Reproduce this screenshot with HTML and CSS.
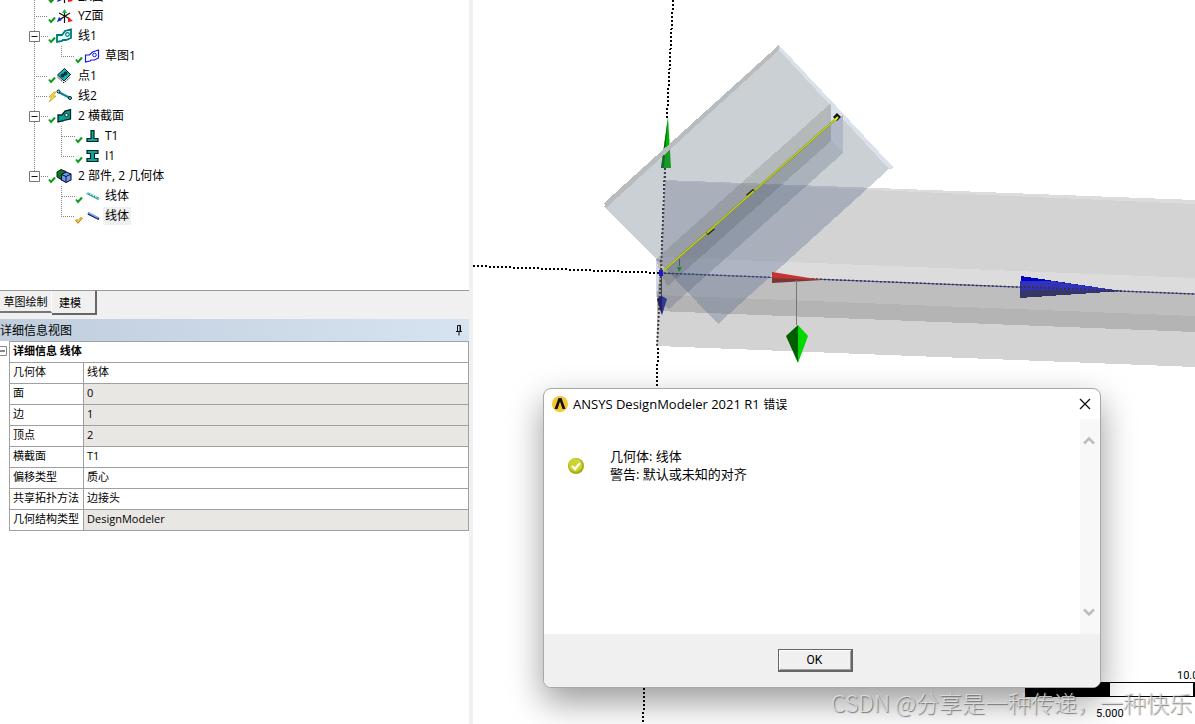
FILE: index.html
```html
<!DOCTYPE html>
<html lang="zh-CN">
<head>
    <meta charset="UTF-8">
    <meta name="viewport" content="width=device-width, initial-scale=1.0">
    <title>DesignModeler</title>
    <link rel="stylesheet" href="styles.css">
</head>
<body>

    <!-- Shared icons -->
    <svg class="defs" width="0" height="0">
        <symbol id="check" viewBox="0 0 8 20"><path d="M1 13.5 3 16 7 11.5" fill="none" stroke="#0a9a1c" stroke-width="2"/></symbol>
        <symbol id="check-warn" viewBox="0 0 8 20"><path d="M1 13.5 3 16 7 11.5" fill="none" stroke="#b07a10" stroke-width="2.4"/><path d="M1 13.3 3 15.5 7 11.3" fill="none" stroke="#ffc830" stroke-width="1.2"/></symbol>
        <symbol id="bolt" viewBox="0 0 8 20"><path d="M6 6 1 11h3l-3 5 7-6H5l3-4z" fill="#ffe040" stroke="#b99a10" stroke-width=".7"/></symbol>
        <symbol id="plane" viewBox="0 0 18 20"><path d="M8.500 4v13M3 7l11 6M3 14l11-7" stroke="#111" stroke-width="1.200"/><path d="M6 7l2.500-4L11 7z" fill="#12c22c"/><path d="M1 16l2-5 3 3z" fill="#1720e8"/><path d="M12 11l5 4-5 1z" fill="#f01818"/></symbol>
        <symbol id="line" viewBox="0 0 18 20"><path d="M1 16V9h5l3-4 6-1.500V12l-5 2H7l-1 1z" fill="#dff" stroke="#04777c" stroke-width="1.800"/><circle cx="11.500" cy="8.500" r="1.800" fill="#fff" stroke="#04777c" stroke-width="1.200"/></symbol>
        <symbol id="sketch" viewBox="-1 0 18 20"><path d="M1.500 16V9h4l3-3 6-2v8l-4 2H7l-1 1z" fill="none" stroke="#1616e6" stroke-width="1.200"/><circle cx="10.500" cy="9" r="1.800" fill="none" stroke="#1616e6"/></symbol>
        <symbol id="point" viewBox="0 0 18 20"><path d="M1.500 11 8 17l6.500-6" fill="#fff" stroke="#111" stroke-dasharray="1.500 1"/><path d="M1.500 9 8.500 2.500l6 6L8 15z" fill="#08bcc0" stroke="#111"/><circle cx="6.500" cy="9.500" r="1.500" fill="#045" stroke="#111"/><circle cx="9.500" cy="7.500" r="1.500" fill="#045" stroke="#111"/></symbol>
        <symbol id="edge" viewBox="0 0 18 20"><path d="M2.500 6 14 12" stroke="#06858c" stroke-width="2"/><circle cx="2.500" cy="5.500" r="1.500" fill="#4df0f0" stroke="#111"/><circle cx="14" cy="12" r="1.500" fill="#4df0f0" stroke="#111"/></symbol>
        <symbol id="sections" viewBox="0 0 18 20"><path d="M2 16V9h4l3-4 5.500-1.500V13L9 14l-2 1z" fill="#08a09a" stroke="#022" stroke-width="1.300"/><circle cx="10.500" cy="9" r="1.700" fill="#fff" stroke="#022"/></symbol>
        <symbol id="t-shape" viewBox="-2 0 18 20"><path d="M6 4.500h3v8h4v3H2v-3h4z" fill="#08a8a0" stroke="#022" stroke-width="1.200"/></symbol>
        <symbol id="i-shape" viewBox="-2 0 18 20"><path d="M2 4.500h11v3H9.500v5H13v3H2v-3h3.500v-5H2z" fill="#08a8a0" stroke="#022" stroke-width="1.200"/></symbol>
        <symbol id="parts" viewBox="0 0 18 20"><path d="M1 6 5 3.500l5 2V12l-4 2-5-3z" fill="#0a7a1c" stroke="#021"/><path d="M5.500 8.500 10 6l5 2v6l-5 2.500-4.500-2.500z" fill="#6d9af2" stroke="#113" stroke-width="1.100"/><path d="M5.500 8.500 10 10.500l5-2.500M10 10.500v6" fill="none" stroke="#113"/></symbol>
        <symbol id="body-teal" viewBox="-2 0 18 20"><path d="M2 7 14 13" stroke="#178c80" stroke-width="2.500"/><path d="M2 6.500 14 12.500" stroke="#a8f0e8" stroke-width="1.500" stroke-dasharray="2 1"/></symbol>
        <symbol id="body-blue" viewBox="-2 0 18 20"><path d="M3 7.500 14 13" stroke="#101a50" stroke-width="2.500"/><path d="M3 6.500 13.500 12" stroke="#7aa2ee" stroke-width="1.500"/></symbol>
        <!-- Tree connectors -->
        <symbol id="rail-root" viewBox="0 0 48 20"><path d="M34.500 0v20M36 10.500h12" class="dots"/></symbol>
        <symbol id="rail-open" viewBox="0 0 48 20"><path d="M34.500 0v20M41 10.500h7" class="dots"/><path d="M29.500 5.500h10v10h-10z" fill="#fff" stroke="#777"/><path d="M31.500 10.500h6" stroke="#111"/></symbol>
        <symbol id="rail-open-last" viewBox="0 0 48 20"><path d="M34.500 0v5M41 10.500h7" class="dots"/><path d="M29.500 5.500h10v10h-10z" fill="#fff" stroke="#777"/><path d="M31.500 10.500h6" stroke="#111"/></symbol>
        <symbol id="rail-mid" viewBox="0 0 75 20"><path d="M34.500 0v20M61.500 0v20M62 10.500h13" class="dots"/></symbol>
        <symbol id="rail-end" viewBox="0 0 75 20"><path d="M34.500 0v20M61.500 0v10.500H75" class="dots"/></symbol>
        <symbol id="rail-sub-mid" viewBox="0 0 75 20"><path d="M61.500 0v20M62 10.500h13" class="dots"/></symbol>
        <symbol id="rail-sub-end" viewBox="0 0 75 20"><path d="M61.500 0v10.500H75" class="dots"/></symbol>
    </svg>

    <div class="app">
        <aside class="sidebar">
            <!-- Model tree -->
            <ul class="tree">
                <li class="row row-cut"><svg class="rail"><use href="#rail-root"/></svg><svg class="state"><use href="#check"/></svg><svg class="icon"><use href="#plane"/></svg><span class="label">ZX面</span></li>
                <li class="row"><svg class="rail"><use href="#rail-root"/></svg><svg class="state"><use href="#check"/></svg><svg class="icon"><use href="#plane"/></svg><span class="label">YZ面</span></li>
                <li>
                    <div class="row"><button class="toggle" aria-label="折叠 线1"><svg class="rail"><use href="#rail-open"/></svg></button><svg class="state"><use href="#check"/></svg><svg class="icon"><use href="#line"/></svg><span class="label">线1</span></div>
                    <ul>
                        <li class="row"><svg class="rail rail-sub"><use href="#rail-end"/></svg><svg class="state"><use href="#check"/></svg><svg class="icon"><use href="#sketch"/></svg><span class="label">草图1</span></li>
                    </ul>
                </li>
                <li class="row"><svg class="rail"><use href="#rail-root"/></svg><svg class="state"><use href="#check"/></svg><svg class="icon"><use href="#point"/></svg><span class="label">点1</span></li>
                <li class="row"><svg class="rail"><use href="#rail-root"/></svg><svg class="state"><use href="#bolt"/></svg><svg class="icon"><use href="#edge"/></svg><span class="label">线2</span></li>
                <li>
                    <div class="row"><button class="toggle" aria-label="折叠 横截面"><svg class="rail"><use href="#rail-open"/></svg></button><svg class="state"><use href="#check"/></svg><svg class="icon"><use href="#sections"/></svg><span class="label">2 横截面</span></div>
                    <ul>
                        <li class="row"><svg class="rail rail-sub"><use href="#rail-mid"/></svg><svg class="state"><use href="#check"/></svg><svg class="icon"><use href="#t-shape"/></svg><span class="label">T1</span></li>
                        <li class="row"><svg class="rail rail-sub"><use href="#rail-end"/></svg><svg class="state"><use href="#check"/></svg><svg class="icon"><use href="#i-shape"/></svg><span class="label">I1</span></li>
                    </ul>
                </li>
                <li>
                    <div class="row"><button class="toggle" aria-label="折叠 部件"><svg class="rail"><use href="#rail-open-last"/></svg></button><svg class="state"><use href="#check"/></svg><svg class="icon"><use href="#parts"/></svg><span class="label">2 部件, 2 几何体</span></div>
                    <ul>
                        <li class="row"><svg class="rail rail-sub"><use href="#rail-sub-mid"/></svg><svg class="state"><use href="#check"/></svg><svg class="icon"><use href="#body-teal"/></svg><span class="label">线体</span></li>
                        <li class="row"><svg class="rail rail-sub"><use href="#rail-sub-end"/></svg><svg class="state"><use href="#check-warn"/></svg><svg class="icon"><use href="#body-blue"/></svg><span class="label selected">线体</span></li>
                    </ul>
                </li>
            </ul>

            <div class="tabs">
                <button class="tab">草图绘制</button>
                <button class="tab active">建模</button>
            </div>

            <!-- Details view -->
            <div class="details-header">
                <span>详细信息视图</span>
                <button class="pin" aria-label="固定"><svg width="8" height="12" viewBox="0 0 8 12"><path d="M2.500 7V1.500h3V7M1 7.500h6M4 8v3.500M5 2v5" fill="none" stroke="#111"/></svg></button>
            </div>
            <div class="details">
                <button class="collapse" aria-label="折叠"><svg width="7" height="10" viewBox="0 0 7 10"><path d="M-2 .5h8.500v9H-2" fill="none" stroke="#888"/><path d="M0 5h5" stroke="#111"/></svg></button>
                <table>
                    <tr><th colspan="2" class="group">详细信息 线体</th></tr>
                    <tr><th>几何体</th><td>线体</td></tr>
                    <tr><th>面</th><td class="readonly">0</td></tr>
                    <tr><th>边</th><td class="readonly">1</td></tr>
                    <tr><th>顶点</th><td class="readonly">2</td></tr>
                    <tr><th>横截面</th><td>T1</td></tr>
                    <tr><th>偏移类型</th><td>质心</td></tr>
                    <tr><th>共享拓扑方法</th><td>边接头</td></tr>
                    <tr><th>几何结构类型</th><td class="readonly">DesignModeler</td></tr>
                </table>
            </div>
        </aside>

        <main class="viewport">
            <svg class="scene" viewBox="473 0 722 724" preserveAspectRatio="xMinYMin slice">
                <!-- Axes -->
                <g stroke="#000" stroke-width="2" stroke-dasharray="2 2" fill="none" shape-rendering="crispEdges">
                    <path d="M673 0 667 118M665 168 661 273 656 400 643 724"/>
                    <path d="M473 266 660 273"/>
                </g>
                <path d="M668 117 671 168H661z" fill="#00b400"/>
                <path d="M668 117 664 168H661z" fill="#006e10"/>

                <!-- Horizontal beam -->
                <g shape-rendering="crispEdges">
                    <path d="M665 180 1195 200V294L660 273z" fill="#dcdcdc"/>
                    <path d="M665 181 1195 204V278L662 257z" fill="#d3d3d3"/>
                    <path d="M660 273 1195 294V316L657 295z" fill="#bebebe"/>
                    <path d="M657 295 1195 316V332L657 311z" fill="#b4b4b4"/>
                    <path d="M657 311 1195 332V367L657 346z" fill="#d3d3d3"/>
                </g>
                <path d="M660 273 1195 294" stroke="#5357c8"/>
                <path d="M660 273 1195 294" stroke="#333" stroke-width="1.500" stroke-dasharray="2 2"/>
                <path d="M665 168 661 273 657 346" fill="none" stroke="#333" stroke-width="2" stroke-dasharray="2 2"/>

                <!-- Tilted T section -->
                <g shape-rendering="crispEdges">
                    <path d="M779 50 890 168 718 324 656 259 604 206z" fill="rgba(78,98,112,.3)"/>
                    <path d="M665 180 869 188 718 324 661 264z" fill="rgba(160,165,255,.1)"/>
                    <path d="M779 45v5L606 208l-2-5z" fill="#b8bcbf"/>
                    <path d="M779 45 893 167 890 170 779 50z" fill="#dbe1ea"/>
                    <path d="M831 103V123L660 273 656 259z" fill="rgba(80,75,65,.18)"/>
                    <path d="M831 123V141L668 286 660 273z" fill="rgba(32,45,59,.3)"/>
                    <path d="M831 141 843 153 669 309 656 297V259H661V273L668 286z" fill="rgba(58,76,104,.22)"/>
                    <path d="M831 103 843 115V153L831 141z" fill="#dbe1ea"/>
                    <path d="M831 123 843 115V153L831 141z" fill="#b2b9c6"/>
                </g>
                <path d="M661 273 837 118" stroke="#7c8420" stroke-width="2"/>
                <path d="M661 273 837 118" stroke="#c4d81c" stroke-width="1.200"/>
                <path d="M833 117 837 113 841 117 837 121z" fill="#111"/>
                <path d="M835 120 838 117" stroke="#e6fb00" stroke-width="2"/>
                <path d="M747 196 754 190M707 234 714 228" stroke="#222" stroke-width="3"/>
                <path d="M747 197 754 191M707 233 714 227" stroke="#b5c810" stroke-width="2"/>

                <!-- Direction arrows -->
                <path d="M659 270h4v6h-4z" fill="#1a1ad0"/>
                <path d="M661.500 276V298" stroke="#444"/>
                <path d="M657 299 662 296 667 299 662 315z" fill="#343494"/>
                <path d="M657 299 662 296V315z" fill="#20205e"/>
                <path d="M679.500 259V266" stroke="#555"/>
                <path d="M677 267h5L679 272z" fill="#168c26"/>
                <path d="M772 272 822 280H772z" fill="#c43432"/>
                <path d="M772 278 822 280 772 283z" fill="#783636"/>
                <path d="M796.500 280V325" stroke="#777"/>
                <path d="M798 325 808 336 798 363z" fill="#00d800"/>
                <path d="M798 325 786 336 798 363z" fill="#005e00"/>
                <g shape-rendering="crispEdges">
                    <path d="M1021 276 1122 291 1021 282z" fill="#0000cc"/>
                    <path d="M1020 281h32L1122 291 1020 290z" fill="#3333b8"/>
                    <path d="M1020 290 1122 291 1020 298z" fill="#363666"/>
                </g>
                <path d="M1020 287 1122 291" stroke="#333" stroke-width="1.500" stroke-dasharray="2 2"/>

                <!-- Scale bar -->
                <path d="M1109.500 682.500h85v14h-85" fill="#fff" stroke="#000" shape-rendering="crispEdges"/>
                <path d="M1025 682h85v15h-85zM1193 682h2v15h-2z"/>
                <text x="1177" y="679" class="scale">10.000</text>
                <text x="1096" y="717" class="scale">5.000</text>
            </svg>
        </main>
    </div>

    <!-- Error dialog -->
    <div class="dialog" role="dialog" aria-labelledby="dialogTitle">
        <div class="dialog-title">
            <svg width="16" height="16" viewBox="0 0 16 16"><circle cx="8" cy="8" r="8" fill="#f7c628"/><path d="M2.500 13 6.500 2h3l4 11h-3L8 5.500 5.500 13z" fill="#111"/></svg>
            <span id="dialogTitle">ANSYS DesignModeler 2021 R1 <small>错误</small></span>
            <button class="close" aria-label="关闭"><svg width="12" height="12" viewBox="0 0 12 12"><path d="M1 1 11 11M11 1 1 11" stroke="#111" stroke-width="1.300"/></svg></button>
        </div>
        <div class="dialog-body">
            <svg class="ok-icon" width="16" height="16" viewBox="0 0 16 16"><circle cx="8" cy="8" r="8" fill="#a5ad10"/><circle cx="7.500" cy="7" r="6.800" fill="#cbd32c"/><path d="M4 8 7 11 12 5" fill="none" stroke="#fff" stroke-width="2.400"/></svg>
            <p>几何体: 线体<br>警告: 默认或未知的对齐</p>
            <div class="scrollbar">
                <button aria-label="向上"><svg width="12" height="9" viewBox="0 0 12 9"><path d="M1 7.500 6 2.500 11 7.500" fill="none" stroke="#bdbdbd" stroke-width="2.500"/></svg></button>
                <button aria-label="向下"><svg width="12" height="9" viewBox="0 0 12 9"><path d="M1 1.500 6 6.500 11 1.500" fill="none" stroke="#bdbdbd" stroke-width="2.500"/></svg></button>
            </div>
        </div>
        <div class="dialog-footer">
            <button class="ok">OK</button>
        </div>
    </div>

    <div class="watermark">CSDN @分享是一种传递，一种快乐</div>

</body>
</html>
```
FILE: styles.css
```css
* {
    box-sizing: border-box;
}
body {
    margin: 0;
    font-family: "Open Sans", "Noto Sans CJK SC", sans-serif;
    font-size: 12px;
    color: #000;
    background: #fff;
    overflow: hidden;
}
button {
    font: inherit;
    color: inherit;
    padding: 0;
    border: none;
    background: none;
}
svg {
    display: block;
    flex: none;
}
.defs {
    position: absolute;
}
.app {
    display: flex;
    position: relative;
    height: 100vh;
}
.sidebar {
    flex: 0 0 473px;
    border-right: 4px solid #f0f0f0;
    overflow: hidden;
}

/* Tree */
.tree {
    height: 290px;
    overflow: hidden;
}
.tree, .tree ul {
    list-style: none;
    margin: 0;
    padding: 0;
}
.row {
    display: flex;
    align-items: center;
    height: 20px;
}
.row-cut {
    height: 6px;
    align-items: flex-end;
}
.rail {
    width: 48px;
    height: 20px;
}
.rail-sub {
    width: 75px;
}
.dots {
    fill: none;
    stroke: #888;
    stroke-dasharray: 1 1;
    shape-rendering: crispEdges;
}
.state {
    width: 8px;
    height: 20px;
}
.icon {
    width: 18px;
    height: 20px;
}
.label {
    line-height: 18px;
    padding: 0 2px;
    margin-left: 2px;
    white-space: nowrap;
}
.selected {
    background: #f0f0f0;
}

/* Tabs */
.tabs {
    display: flex;
    align-items: flex-start;
    height: 29px;
    background: #f0f0f0;
    border-top: 1px solid #999;
    font-size: 11px;
}
.tab {
    height: 22px;
    width: 52px;
    border-right: 1px solid #fff;
    border-bottom: 2px solid #777;
}
.tab.active {
    height: 24px;
    width: 45px;
    padding-right: 7px;
    border-right: 2px solid #666;
    border-bottom-color: #666;
}

/* Details */
.details-header {
    display: flex;
    justify-content: space-between;
    align-items: center;
    height: 22px;
    padding-right: 6px;
    background: linear-gradient(to right, #bfcddc, #d6e4f2);
}
.details {
    display: flex;
    align-items: flex-start;
}
.collapse {
    flex: 0 0 9px;
    padding-top: 5px;
}
table {
    flex: 1;
    border-collapse: collapse;
    table-layout: fixed;
    font-size: 11px;
    line-height: 18px;
}
th, td {
    height: 21px;
    padding: 0 3px 2px;
    border: 1px solid #a0a0a0;
    text-align: left;
    font-weight: normal;
    white-space: nowrap;
}
th {
    width: 74px;
}
.group {
    width: auto;
    font-weight: bold;
}
.readonly {
    background: #e8e7e3;
}

/* 3D view */
.viewport {
    flex: 1;
    min-width: 0;
}
.scene {
    width: 100%;
    height: 100%;
}
.scale {
    font: 11px Roboto, sans-serif;
}

/* Dialog */
.dialog {
    position: absolute;
    left: 543px;
    top: 388px;
    width: 558px;
    border: 1px solid #a8a8a8;
    border-radius: 8px;
    background: #fff;
    box-shadow: 0 14px 34px rgba(0, 0, 0, 0.4);
    overflow: hidden;
}
.dialog-title {
    display: flex;
    align-items: center;
    gap: 5px;
    height: 30px;
    padding: 0 9px 0 8px;
    font-size: 13px;
    line-height: 18px;
}
.dialog-title small {
    font-size: 12px;
}
.close {
    margin-left: auto;
}
.dialog-body {
    display: flex;
    height: 215px;
}
.ok-icon {
    margin: 39px 26px 0 24px;
}
.dialog-body p {
    flex: 1;
    margin: 28px 0 0;
    font-size: 13px;
    line-height: 18px;
}
.scrollbar {
    display: flex;
    flex-direction: column;
    justify-content: space-between;
    align-items: center;
    width: 20px;
    padding: 17px 2px 17px 0;
    background: #f8f8f8;
}
.dialog-footer {
    display: flex;
    justify-content: center;
    align-items: center;
    height: 53px;
    padding-right: 14px;
    background: #f0f0f0;
}
.ok {
    width: 75px;
    height: 23px;
    border: 1px solid #666;
    border-right-width: 2px;
    border-bottom-width: 2px;
    box-shadow: inset 1px 1px #fff, inset -1px -1px #a0a0a0;
    font-family: Roboto, sans-serif;
}
.watermark {
    position: absolute;
    right: 3px;
    bottom: 6px;
    font-family: "Noto Sans CJK SC", sans-serif;
    font-size: 23px;
    font-weight: 300;
    line-height: 32px;
    color: rgba(225, 225, 225, 0.85);
    text-shadow: 1px 1px 1px rgba(90, 90, 90, 0.8);
    white-space: nowrap;
}
```
